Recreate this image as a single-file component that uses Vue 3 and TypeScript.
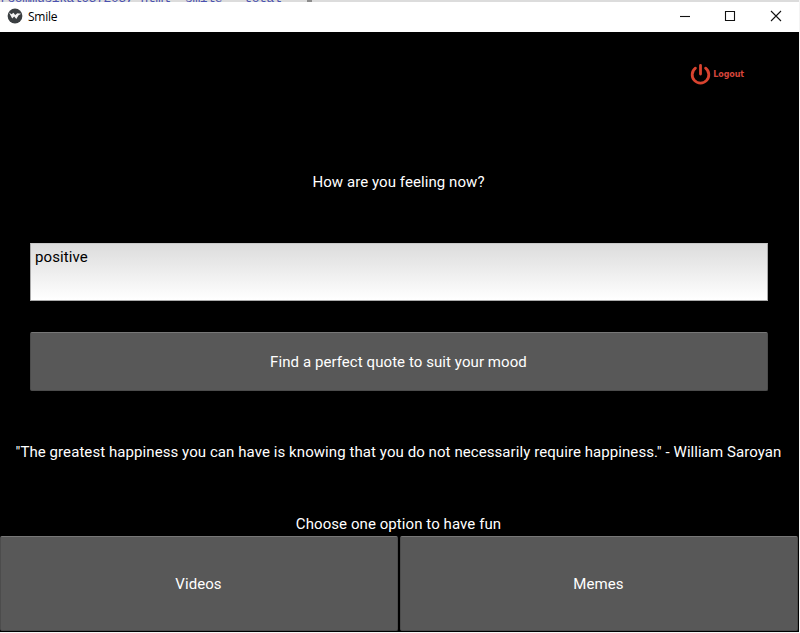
<script setup lang="ts">
import { ref } from 'vue'

const mood = ref('positive')
const quote = ref(
  '"The greatest happiness you can have is knowing that you do not necessarily require happiness." - William Saroyan'
)
const options: string[] = ['Videos', 'Memes']
</script>

<template>
  <div class="desktop">
    <div class="backdrop"><span class="code">rcommusikal957205, html 'smile' 'total'</span><span class="dot"></span></div>
    <div class="window">
      <header class="titlebar">
        <svg class="logo" width="16" height="16" viewBox="0 0 16 16">
          <circle cx="8" cy="8" r="7.4" fill="#3b3f42" />
          <path d="M2 4.6 4.6 6.2 6.4 4.8 8.2 7 10.3 5.2 14.2 5.8 11.6 7.2 9.3 10.9 7.2 8.6 5.2 10.6Z" fill="#f4f4f4" />
        </svg>
        <span class="title">Smile</span>
        <div class="controls">
          <svg width="12" height="12" viewBox="0 0 12 12"><path d="M2 6.5H12" /></svg>
          <svg width="12" height="12" viewBox="0 0 12 12"><path d="M1.5 1.5H10.5V10.5H1.5Z" /></svg>
          <svg width="12" height="12" viewBox="0 0 12 12"><path d="M1 1 11 11M11 1 1 11" /></svg>
        </div>
      </header>
      <main class="screen">
        <div class="top">
          <button class="logout">
            <svg width="20" height="20" viewBox="0 0 20 20">
              <path d="M10.5 1.5V10" />
              <path d="M5.4 4.2A8.3 8.3 0 1 0 15.6 4.2" />
            </svg>
            <span>Logout</span>
          </button>
        </div>
        <p class="label question">How are you feeling now?</p>
        <textarea v-model="mood" class="mood" spellcheck="false"></textarea>
        <button class="btn find">Find a perfect quote to suit your mood</button>
        <p class="label quote">{{ quote }}</p>
        <p class="label choose">Choose one option to have fun</p>
        <div class="options">
          <button v-for="o in options" :key="o" class="btn">{{ o }}</button>
        </div>
      </main>
    </div>
  </div>
</template>

<style>
body {
  margin: 0;
  overflow: hidden;
}
</style>

<style scoped>
.desktop {
  width: 800px;
  height: 633px;
  box-sizing: border-box;
  padding: 0 1px 1px 0;
  background: #f4f4f4;
  display: flex;
  flex-direction: column;
}
.backdrop {
  height: 2px;
  background: #dcdcdc;
  overflow: hidden;
  display: flex;
  align-items: flex-end;
  gap: 18px;
}
.code {
  font: 13px/13px "Liberation Mono", monospace;
  letter-spacing: -0.4px;
  color: #4a50b0;
  height: 10px;
  white-space: pre;
}
.dot {
  width: 5px;
  height: 2px;
  background: #8c8c8c;
}
.window {
  flex: 1;
  display: flex;
  flex-direction: column;
}
.titlebar {
  height: 30px;
  background: #fff;
  display: flex;
  align-items: center;
  padding: 0 17px 2px 7px;
  box-sizing: border-box;
}
.title {
  font: 12px/16px "Open Sans", sans-serif;
  letter-spacing: -0.25px;
  color: #000;
  margin: 2px 0 0 5px;
}
.controls {
  margin-left: auto;
  display: flex;
  gap: 34px;
}
.controls svg {
  display: block;
  fill: none;
  stroke: #111;
  stroke-width: 1.1;
}
.screen {
  flex: 1;
  background: #000;
  display: flex;
  flex-direction: column;
  font-family: Roboto, sans-serif;
  font-size: 15px;
  letter-spacing: 0.075px;
}
.top {
  display: flex;
  justify-content: flex-end;
  padding: 32px 55px 0 0;
  height: 109px;
  box-sizing: border-box;
}
button {
  border: 0;
  padding: 0;
  font: inherit;
  letter-spacing: inherit;
}
.logout {
  display: flex;
  align-items: center;
  gap: 3px;
  height: 20px;
  background: none;
  color: #d4453b;
  font: bold 8px/12px "DejaVu Sans", sans-serif;
  letter-spacing: -0.1px;
}
.logout span {
  padding-top: 2px;
}
.logout svg {
  fill: none;
  stroke: #d8432f;
  stroke-width: 2.8;
  stroke-linecap: round;
  overflow: visible;
}
.label {
  margin: 0;
  height: 18px;
  line-height: 18px;
  color: #fff;
  text-align: center;
  white-space: nowrap;
  padding-right: 2px;
}
.question {
  margin: 32px 0 52px;
}
.mood {
  display: block;
  margin: 0 31px 0 30px;
  height: 58px;
  box-sizing: border-box;
  border: 1px solid #aaa;
  border-top-color: #c8c8c8;
  background: linear-gradient(#dcdcdc, #fff);
  color: #000;
  font: 15px/18px Roboto, sans-serif;
  letter-spacing: 0.1px;
  padding: 4px;
  resize: none;
  outline: none;
  overflow: hidden;
}
.btn {
  background: #585858;
  color: #fff;
  border: 1px solid #4c4c4c;
  border-top-color: #777;
  border-radius: 2px;
  box-sizing: border-box;
  padding-right: 1px;
}
.find {
  margin: 31px 31px 52px 30px;
  height: 59px;
}
.choose {
  margin-top: 54px;
}
.options {
  display: grid;
  grid-template-columns: 1fr 1fr;
  gap: 2px;
  height: 95px;
  margin: 3px 1px 0 0;
}
</style>
